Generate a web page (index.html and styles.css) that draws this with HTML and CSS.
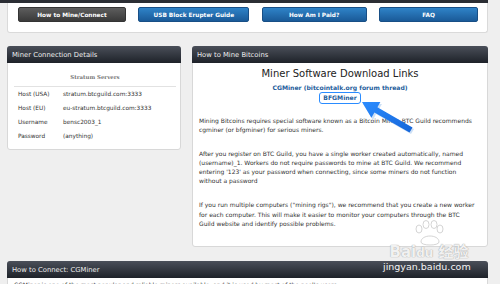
FILE: index.html
```html
<!DOCTYPE html>
<html lang="en">
<head>
    <meta charset="UTF-8">
    <meta name="viewport" content="width=device-width, initial-scale=1.0">
    <title>BTC Guild - How to Mine</title>
    <link rel="stylesheet" href="styles.css">
</head>
<body>
    <div class="topbar"></div>
    <div class="page">
        <div class="nav-box">
            <a class="nav-btn dark w1">How to Mine/Connect</a>
            <a class="nav-btn w2">USB Block Erupter Guide</a>
            <a class="nav-btn w3">How Am I Paid?</a>
            <a class="nav-btn w4">FAQ</a>
        </div>

        <div class="columns">
            <div class="panel side">
                <div class="panel-head">Miner Connection Details</div>
                <table class="servers">
                    <tr><th colspan="2">Stratum Servers</th></tr>
                    <tr><td class="label">Host (USA)</td><td>stratum.btcguild.com:3333</td></tr>
                    <tr><td class="label">Host (EU)</td><td>eu-stratum.btcguild.com:3333</td></tr>
                    <tr><td class="label">Username</td><td>bensc2003_1</td></tr>
                    <tr><td class="label">Password</td><td>(anything)</td></tr>
                </table>
            </div>

            <div class="panel main">
                <div class="panel-head">How to Mine Bitcoins</div>
                <div class="panel-body">
                    <h2>Miner Software Download Links</h2>
                    <a class="dl-link">CGMiner (bitcointalk.org forum thread)</a>
                    <a class="dl-link marked">BFGMiner</a>
                    <p>Mining Bitcoins requires special software known as a Bitcoin Miner. BTC Guild recommends<br>cgminer (or bfgminer) for serious miners.</p>
                    <p>After you register on BTC Guild, you have a single worker created automatically, named<br>(username)_1. Workers do not require passwords to mine at BTC Guild. We recommend<br>entering '123' as your password when connecting, since some miners do not function<br>without a password</p>
                    <p>If you run multiple computers ("mining rigs"), we recommend that you create a new worker<br>for each computer. This will make it easier to monitor your computers through the BTC<br>Guild website and identify possible problems.</p>
                </div>
            </div>
        </div>

        <div class="panel wide">
            <div class="panel-head">How to Connect: CGMiner</div>
            <div class="panel-body">
                <p>CGMiner is one of the most popular and reliable miners available, and it is used by most of the pool's users.</p>
            </div>
        </div>
    </div>

    <!-- annotation arrow from the screenshot -->
    <svg class="arrow" width="500" height="284" viewBox="0 0 500 284">
        <defs>
            <linearGradient id="arrowFill" x1="0" y1="0" x2="1" y2="1">
                <stop offset="0" stop-color="#2b8cff"/>
                <stop offset="1" stop-color="#1565d8"/>
            </linearGradient>
        </defs>
        <polygon points="363,104 382,104 379,109 414,129 411,134 376,114 373,120" fill="#9cc2ee" opacity="0.5"/>
        <polygon points="362,102 380.4,102.1 377.4,107.3 412.5,127.4 409.5,132.6 374.4,112.5 371.4,117.7" fill="url(#arrowFill)"/>
    </svg>

    <div class="watermark">
        <svg class="paw" width="40" height="26" viewBox="0 0 40 26">
            <g fill="rgba(255,255,255,0.75)" stroke="#c9c9c9" stroke-width="0.8">
                <ellipse cx="10" cy="9" rx="3" ry="4"/>
                <ellipse cx="17" cy="4.5" rx="3" ry="4"/>
                <ellipse cx="25" cy="4.5" rx="3" ry="4"/>
                <ellipse cx="31" cy="9" rx="3" ry="4"/>
                <path d="M12 22 C12 14 30 14 30 22 C30 26 12 26 12 22 Z"/>
            </g>
        </svg>
        <div class="wm-logo">Bai<span class="wm-du">du</span> 经验</div>
    </div>
    <div class="wm-url">jingyan.baidu.com</div>
</body>
</html>
```

FILE: styles.css
```css
body {
    margin: 0;
    width: 500px;
    height: 284px;
    overflow: hidden;
    position: relative;
    background-color: #efefef;
    font-family: "DejaVu Sans", Verdana, sans-serif;
    color: #333;
}
.topbar {
    width: 488px;
    height: 3px;
    background-color: #2b2e34;
}
.page {
    width: 481px;
    padding-left: 7px;
}
.nav-box {
    background-color: #fff;
    border: 1px solid #dadada;
    border-top: none;
    border-radius: 0 0 3px 3px;
    padding: 4px 9px 10px 10px;
    display: flex;
    justify-content: space-between;
}
.nav-btn {
    height: 15px;
    box-sizing: border-box;
    display: flex;
    align-items: center;
    justify-content: center;
    font-size: 5.8px;
    font-weight: bold;
    color: #fff;
    border-radius: 2px;
    background: linear-gradient(#2f83c8, #1a5a98);
    border: 1px solid #184f86;
}
.nav-btn.dark {
    background: linear-gradient(#5d5d5d, #3a3a3a);
    border-color: #343434;
}
.w1 { width: 108px; }
.w2 { width: 111px; }
.w3 { width: 105px; }
.w4 { width: 99px; }

.columns {
    display: flex;
    gap: 11px;
    align-items: flex-start;
    margin-top: 13px;
}
.panel {
    background-color: #fff;
    border: 1px solid #d8d8d8;
    border-radius: 3px;
    box-sizing: border-box;
}
.panel-head {
    height: 17px;
    margin: -1px -1px 0;
    padding-left: 5px;
    display: flex;
    align-items: center;
    background: linear-gradient(#4a4f59, #1e2229);
    border-radius: 3px 3px 0 0;
    color: #ececec;
    font-size: 6.8px;
}
.side {
    width: 174px;
    height: 104px;
}
.main {
    width: 296px;
    height: 201px;
}
.servers {
    width: 162px;
    margin: 0 6px;
    border-collapse: collapse;
    font-size: 5.8px;
    color: #333;
}
.servers th {
    height: 23px;
    padding-top: 6px;
    box-sizing: border-box;
    border-bottom: 1px solid #e2e2e2;
    font-family: "DejaVu Serif", serif;
    font-size: 5.4px;
    color: #777;
}
.servers td {
    height: 14px;
    padding: 0;
}
.servers .label {
    width: 45px;
    padding-left: 4px;
}
.panel-body {
    padding: 0 6px;
}
.panel-body h2 {
    margin: 4px 0 0;
    text-align: center;
    font-size: 10px;
    font-weight: normal;
    line-height: 14px;
    color: #222;
}
.dl-link {
    display: block;
    margin-top: 2px;
    text-align: center;
    font-size: 6.1px;
    font-weight: bold;
    line-height: 9px;
    color: #1d5d9b;
}
.dl-link.marked {
    width: fit-content;
    margin: 0 auto;
    padding: 1px 3px;
    line-height: 8px;
    border: 1.5px solid #2a8cff;
    border-radius: 3px;
}
.panel-body p {
    margin: 11.5px 0 0;
    font-size: 6px;
    line-height: 9.3px;
}
.main .panel-body p + p {
    margin-top: 14.5px;
}
.wide {
    margin-top: 14px;
    height: 40px;
}
.wide .panel-body p {
    margin-top: 2px;
}
.arrow {
    position: absolute;
    top: 0;
    left: 0;
    pointer-events: none;
}
.watermark {
    position: absolute;
    left: 384px;
    top: 220px;
    width: 90px;
    text-align: center;
}
.paw {
    display: block;
    margin: 0 auto -6px;
}
.wm-logo {
    font-size: 15px;
    font-weight: bold;
    color: rgba(255, 255, 255, 0.85);
    text-shadow: 0 0 1px #aaa, 0 0 1px #aaa;
    font-family: "DejaVu Sans", "Noto Sans CJK SC", sans-serif;
}
.wm-du {
    font-size: 12px;
}
.wm-url {
    position: absolute;
    left: 383px;
    top: 261px;
    font-size: 9.5px;
    color: #f4f4f4;
}
```
